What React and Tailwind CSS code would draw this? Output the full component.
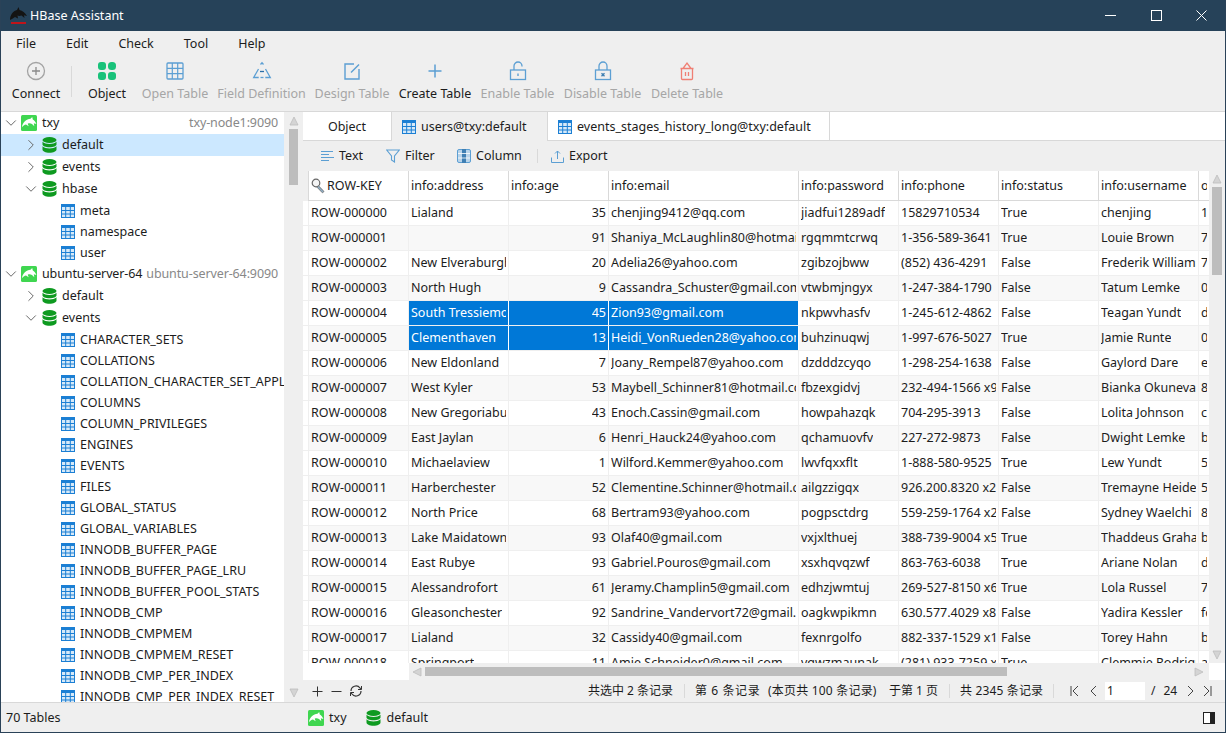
import React from "react";
import { ChevronRight, ChevronDown } from "lucide-react";

const Dolphin = ({ s = 16 }) => (
  <svg width={s} height={s} viewBox="0 0 16 16" className="shrink-0">
    <rect width="16" height="16" rx="1.5" fill="#3fd650" />
    <path d="M.8 12.500C1.500 7.500 5.500 3.800 9.500 3.800L11.200 2l.6 2.600c1.500.8 2.700 2.200 3.600 4.400l-2.600-.7.500 3-2.300-2.300c-1.500-.8-3-.8-4.300-.3l1 2.500-2.700-1.600C3.500 9.800 2 11 .8 12.500z" fill="#fff" />
  </svg>
);
const Db = ({ s = 15 }) => (
  <svg width={s} height={s + 1} viewBox="0 0 15 16" className="shrink-0">
    <ellipse cx="7.5" cy="3" rx="7" ry="3" fill="#0e9a20" />
    <path d="M.5 4.8C2 6.5 4.8 7 7.5 7s5.500-.5 7-2.200V7.500C14.500 9 11.500 10.200 7.500 10.200S.5 9 .5 7.500z" fill="#0e9a20" />
    <path d="M.5 9.300c1.500 1.700 4.300 2.200 7 2.200s5.500-.5 7-2.200v3.200c0 1.800-3 3.200-7 3.200s-7-1.400-7-3.200z" fill="#0e9a20" />
  </svg>
);
const TableIcon = ({ s = 14, c = "#1b7fd4" }) => (
  <svg width={s} height={s} viewBox="0 0 14 14" className="shrink-0">
    <rect x="0.5" y="0.5" width="13" height="13" fill="#d6e9f8" stroke={c} />
    <rect x="0" y="0" width="14" height="3" fill={c} />
    <path d="M4.700 3v10.500M9.300 3v10.500M.5 6.500h13M.5 10h13" stroke={c} strokeWidth="1" />
  </svg>
);
const Key = () => (
  <svg width="15" height="16" viewBox="0 0 15 16" className="shrink-0">
    <circle cx="5" cy="5" r="3.800" fill="#f4f4f4" stroke="#666" strokeWidth="1.200" />
    <path d="M7.500 7.800l5.500 5.700-1.600 1.300-5.500-5.700z" fill="#8fb0c8" stroke="#666" strokeWidth="0.800" />
  </svg>
);
const Ico = ({ children, w = 20, h = 20 }) => (
  <svg width={w} height={h} viewBox="0 0 20 20" fill="none" className="shrink-0">{children}</svg>
);
const blue = "#5c9fd3";
const TOOLS = [
  { t: "Connect", w: "w-[48px]", on: 1, i: <Ico><circle cx="10" cy="10" r="8.500" stroke="#a3a3a3" strokeWidth="1.300" /><path d="M10 6v8M6 10h8" stroke="#8a8a8a" strokeWidth="1.300" /></Ico> },
  { sep: 1 },
  { t: "Object", w: "w-[38px] mr-[6px]", on: 1, i: <Ico><rect x="1" y="1" width="8" height="8" rx="3" fill="#19c27a" /><rect x="11" y="1" width="8" height="8" rx="3.500" fill="#19c27a" /><rect x="1" y="11" width="8" height="8" rx="3" fill="#19c27a" /><rect x="11" y="11" width="8" height="8" rx="3" fill="#19c27a" /></Ico> },
  { t: "Open Table", w: "w-[66px]", i: <Ico><rect x="2" y="2" width="16" height="16" rx="1" stroke={blue} strokeWidth="1.300" /><path d="M7.300 2v16M12.700 2v16M2 7.300h16M2 12.700h16" stroke={blue} strokeWidth="1.200" /></Ico> },
  { t: "Field Definition", w: "w-[87px]", i: <Ico><path d="M8.500 3.500l1.500-1.700 1.500 1.700" stroke={blue} strokeWidth="1.300" /><path d="M6.500 8l-4.800 8.500h5M13.500 8l4.800 8.500h-5" stroke={blue} strokeWidth="1.300" /><path d="M8 10.500h4" stroke="#2a6ea8" strokeWidth="1.300" /><path d="M8.500 16.500h3" stroke={blue} strokeWidth="1.300" /></Ico> },
  { t: "Design Table", w: "w-[74px]", i: <Ico><path d="M12 3H3v15h14V8" stroke={blue} strokeWidth="1.400" /><path d="M9 11.500l8-8" stroke={blue} strokeWidth="1.400" /></Ico> },
  { t: "Create Table", w: "w-[72px]", on: 1, i: <Ico><path d="M10 3.500v13M3.500 10h13" stroke={blue} strokeWidth="1.500" /></Ico> },
  { t: "Enable Table", w: "w-[73px]", i: <Ico><rect x="2.500" y="9" width="15" height="9.500" stroke={blue} strokeWidth="1.300" /><path d="M6 9V5a4 4 0 0 1 8 0v.5" stroke={blue} strokeWidth="1.300" /><path d="M10 12.500v2.500" stroke={blue} strokeWidth="1.400" /></Ico> },
  { t: "Disable Table", w: "w-[77px]", i: <Ico><rect x="2.500" y="9" width="15" height="9.500" stroke={blue} strokeWidth="1.300" /><path d="M6 9V5a4 4 0 0 1 8 0v4" stroke={blue} strokeWidth="1.300" /><path d="M8.500 12.300l3 3M11.500 12.300l-3 3" stroke="#3a7cb0" strokeWidth="1.300" /></Ico> },
  { t: "Delete Table", w: "w-[72px]", i: <Ico><path d="M4.500 8v9.500a1 1 0 0 0 1 1h9a1 1 0 0 0 1-1V8" stroke="#ef7f74" strokeWidth="1.300" /><path d="M3.500 7.500h13M6 7.500l4-5.500 4 5.500" stroke="#ef7f74" strokeWidth="1.300" /><path d="M8.500 11v4M11.500 11v4" stroke="#ef7f74" strokeWidth="1.300" /></Ico> },
];

const TABLES = ["CHARACTER_SETS","COLLATIONS","COLLATION_CHARACTER_SET_APPLICABILITY","COLUMNS","COLUMN_PRIVILEGES","ENGINES","EVENTS","FILES","GLOBAL_STATUS","GLOBAL_VARIABLES","INNODB_BUFFER_PAGE","INNODB_BUFFER_PAGE_LRU","INNODB_BUFFER_POOL_STATS","INNODB_CMP","INNODB_CMPMEM","INNODB_CMPMEM_RESET","INNODB_CMP_PER_INDEX","INNODB_CMP_PER_INDEX_RESET"];

const Host = ({ name, host }) => (
  <div className="flex items-center h-[22px] pl-[1px] pr-[6px] shrink-0 tracking-[-0.12px]">
    <ChevronDown size={18} strokeWidth={1.300} color="#666" className="shrink-0" />
    <span className="ml-[1px]"><Dolphin /></span>
    <span className="ml-[5px] whitespace-nowrap">{name}</span>
    <span className="ml-auto text-[#888] whitespace-nowrap">{host}</span>
  </div>
);
const DbRow = ({ name, open, sel }) => (
  <div className={`flex items-center h-[22px] pl-[21px] shrink-0 ${sel ? "bg-[#cce8ff]" : ""}`}>
    {open ? <ChevronDown size={18} strokeWidth={1.300} color="#666" className="shrink-0" /> : <ChevronRight size={18} strokeWidth={1.300} color="#666" className="shrink-0" />}
    <span className="ml-[2px]"><Db /></span>
    <span className="ml-[5px]">{name}</span>
  </div>
);
const TbRow = ({ name }) => (
  <div className="flex items-center h-[21px] pl-[60px] shrink-0">
    <TableIcon />
    <span className="ml-[5px] whitespace-nowrap">{name}</span>
  </div>
);

const COLS = [
  "w-[100px]","w-[100px]","w-[100px]","w-[190px]","w-[100px]","w-[100px]","w-[100px]","w-[100px]","w-[11px]",
];
const HEAD = ["ROW-KEY","info:address","info:age","info:email","info:password","info:phone","info:status","info:username","other"];
const ROWS = [
  ["Lialand",35,"chenjing9412@qq.com","jiadfui1289adf","15829710534","True","chenjing","1"],
  ["",91,"Shaniya_McLaughlin80@hotmail.com","rgqmmtcrwq","1-356-589-3641","True","Louie Brown","7"],
  ["New Elveraburgh",20,"Adelia26@yahoo.com","zgibzojbww","(852) 436-4291","False","Frederik Williamson","7"],
  ["North Hugh",9,"Cassandra_Schuster@gmail.com","vtwbmjngyx","1-247-384-1790","False","Tatum Lemke","0"],
  ["South Tressiemouth",45,"Zion93@gmail.com","nkpwvhasfv","1-245-612-4862","False","Teagan Yundt","d"],
  ["Clementhaven",13,"Heidi_VonRueden28@yahoo.com","buhzinuqwj","1-997-676-5027","True","Jamie Runte","0"],
  ["New Eldonland",7,"Joany_Rempel87@yahoo.com","dzdddzcyqo","1-298-254-1638","False","Gaylord Dare","e"],
  ["West Kyler",53,"Maybell_Schinner81@hotmail.com","fbzexgidvj","232-494-1566 x9","False","Bianka Okuneva","8"],
  ["New Gregoriaburgh",43,"Enoch.Cassin@gmail.com","howpahazqk","704-295-3913","False","Lolita Johnson","c7"],
  ["East Jaylan",6,"Henri_Hauck24@yahoo.com","qchamuovfv","227-272-9873","False","Dwight Lemke","b"],
  ["Michaelaview",1,"Wilford.Kemmer@yahoo.com","lwvfqxxflt","1-888-580-9525","True","Lew Yundt","5"],
  ["Harberchester",52,"Clementine.Schinner@hotmail.com","ailgzzigqx","926.200.8320 x28","False","Tremayne Heide","5"],
  ["North Price",68,"Bertram93@yahoo.com","pogpsctdrg","559-259-1764 x2","False","Sydney Waelchi","8"],
  ["Lake Maidatown",93,"Olaf40@gmail.com","vxjxlthuej","388-739-9004 x5","True","Thaddeus Graham","b"],
  ["East Rubye",93,"Gabriel.Pouros@gmail.com","xsxhqvqzwf","863-763-6038","True","Ariane Nolan","d"],
  ["Alessandrofort",61,"Jeramy.Champlin5@gmail.com","edhzjwmtuj","269-527-8150 x6","True","Lola Russel","7"],
  ["Gleasonchester",92,"Sandrine_Vandervort72@gmail.com","oagkwpikmn","630.577.4029 x88","False","Yadira Kessler","fc"],
  ["Lialand",32,"Cassidy40@gmail.com","fexnrgolfo","882-337-1529 x1","False","Torey Hahn","b"],
  ["Springport",11,"Amie.Schneider0@gmail.com","vqwzmaunak","(281) 933-7259 x","True","Clemmie Rodriguez","a"],
];

const Arrow = ({ d }) => {
  const p = { u: "M5 1l4 8H1z", d: "M1 1h8L5 9z", l: "M1 5l8-4v8z", r: "M9 5L1 1v8z" }[d];
  return <svg width="10" height="10" viewBox="0 0 10 10" className="shrink-0"><path d={p} fill="#d4d4d4" stroke="#bdbdbd" strokeWidth="0.800" /></svg>;
};

const Cell = ({ w, text, right, sel, head }) => (
  <div className={`${w} shrink-0 h-full border-r px-[2px] flex items-center overflow-hidden whitespace-nowrap ${right ? "justify-end" : ""} ${head ? "border-[#d9d9d9]" : sel ? "pb-[1px] bg-[#0078d7] text-white border-white" : "pb-[1px] border-[#efefef]"}`}>
    <span className="block overflow-hidden">{text}</span>
  </div>
);

const Sep = () => <div className="w-px h-[14px] bg-[#d9d9d9] shrink-0" />;

const Pager = ({ d }) => (
  <svg width="10" height="12" viewBox="0 0 10 12" fill="none" stroke="#444" strokeWidth="1" className="shrink-0"><path d={d} /></svg>
);

export default function App() {
  return (
    <div className="w-[1226px] h-[733px] flex flex-col overflow-hidden border border-t-0 border-[#2a4258] bg-[#efefef] text-[12.5px] leading-[18px] text-[#1c1c1c] font-['Noto_Sans','Noto_Sans_CJK_SC',sans-serif]">
      <div className="h-[31px] shrink-0 bg-[#264259] flex items-center text-white pl-[8px]">
        <svg width="20" height="20" viewBox="0 0 20 20" className="shrink-0">
          <path d="M1 14c0-5 3-9 7-10l1.500-3 1 3c3 .5 5.500 3 7.500 6l-3-.8.5 2.800-3-2.500c-1.500 .5-3 .5-4 0l.5 3-3-1.500L3 13z" fill="#141414" />
          <rect x="2" y="16" width="15" height="2" fill="#c0141a" />
        </svg>
        <span className="ml-[1px]">HBase Assistant</span>
        <div className="ml-auto flex items-center">
          <div className="w-[46px] flex justify-center"><svg width="11" height="11" viewBox="0 0 11 11"><path d="M0 5.500h11" stroke="#fff" /></svg></div>
          <div className="w-[46px] flex justify-center"><svg width="11" height="11" viewBox="0 0 11 11"><rect x="0.500" y="0.500" width="10" height="10" fill="none" stroke="#fff" /></svg></div>
          <div className="w-[46px] flex justify-center pr-[1px]"><svg width="11" height="11" viewBox="0 0 11 11"><path d="M.5.500l10 10M10.500.500l-10 10" stroke="#fff" /></svg></div>
        </div>
      </div>

      <div className="h-[25px] shrink-0 flex items-center gap-[30px] pl-[15px]">
        {["File","Edit","Check","Tool","Help"].map((m) => <span key={m}>{m}</span>)}
      </div>

      <div className="h-[56px] shrink-0 flex items-start gap-[10px] pl-[11px] border-b border-[#d8d8d8]">
        {TOOLS.map((t, i) => t.sep ? (
          <div key={i} className="w-px h-[31px] bg-[#d9d9d9] mt-[10px] ml-[1px] mr-[6px]" />
        ) : (
          <div key={t.t} className={`${t.w} shrink-0 flex flex-col items-center pt-[5px] whitespace-nowrap ${t.on ? "" : "text-[#a6a6a6]"}`}>
            {t.i}
            <span className="mt-[4px]">{t.t}</span>
          </div>
        ))}
      </div>

      <div className="flex-1 min-h-0 flex">
        <div className="w-[283px] shrink-0 bg-white overflow-hidden flex flex-col">
          <Host name="txy" host="txy-node1:9090" />
          <DbRow name="default" sel />
          <DbRow name="events" />
          <DbRow name="hbase" open />
          {["meta","namespace","user"].map((n) => <TbRow key={n} name={n} />)}
          <Host name="ubuntu-server-64" host="ubuntu-server-64:9090" />
          <DbRow name="default" />
          <DbRow name="events" open />
          {TABLES.map((n) => <TbRow key={n} name={n} />)}
        </div>

        <div className="w-[19px] shrink-0 flex flex-col items-center justify-between py-[4px]">
          <div className="flex flex-col items-center gap-[3px]">
            <Arrow d="u" />
            <div className="w-[9px] h-[56px] bg-[#bdbdbd]" />
          </div>
          <Arrow d="d" />
        </div>

        <div className="flex-1 min-w-0 flex flex-col">
          <div className="h-[29px] shrink-0 flex bg-white border-b border-[#d8d8d8]">
            <div className="w-[89px] h-[29px] pt-[1px] border-r border-b border-[#d8d8d8] flex items-center justify-center">Object</div>
            <div className="w-[155px] h-[29px] pt-[1px] bg-[#efefef] flex items-center pl-[10px] gap-[5px]"><TableIcon />users@txy:default</div>
            <div className="w-[283px] h-[28px] pt-[1px] border-l border-r border-[#d8d8d8] flex items-center pl-[10px] gap-[5px] whitespace-nowrap"><TableIcon />events_stages_history_long@txy:default</div>
          </div>

          <div className="h-[30px] shrink-0 flex items-center pl-[18px]">
            <svg width="13" height="13" viewBox="0 0 13 13" className="shrink-0"><path d="M0 1.500h12M0 4.500h8M0 7.500h13M0 10.500h8" stroke="#5c9fd3" strokeWidth="1.200" /></svg>
            <span className="ml-[5px] w-[24px] whitespace-nowrap">Text</span>
            <svg width="14" height="14" viewBox="0 0 14 14" fill="none" className="ml-[23px] shrink-0"><path d="M.7 1h12.600L8.500 7v6L5.500 11V7z" stroke="#5c9fd3" strokeWidth="1.100" /></svg>
            <span className="ml-[5px] w-[29px] whitespace-nowrap">Filter</span>
            <svg width="14" height="14" viewBox="0 0 14 14" className="ml-[23px] shrink-0"><rect x="0.500" y="0.500" width="13" height="13" rx="1.500" fill="#b9d4ea" stroke="#5c9fd3" /><rect x="5" y="0" width="4" height="14" fill="#3f7fb3" /><path d="M1 4.500h12M1 9h12" stroke="#fff" strokeWidth="0.800" /></svg>
            <span className="ml-[5px] w-[45px] whitespace-nowrap">Column</span>
            <div className="ml-[16px]"><Sep /></div>
            <svg width="13" height="13" viewBox="0 0 13 13" fill="none" className="ml-[13px] shrink-0"><path d="M6.500 9V1M4 3.500L6.500 1 9 3.500" stroke="#5c9fd3" /><path d="M.5 7.500v5h12v-5" stroke="#5c9fd3" /></svg>
            <span className="ml-[5px]">Export</span>
          </div>

          <div className="h-[509px] shrink-0 flex">
            <div className="w-[906px] shrink-0 flex flex-col">
              <div className="h-[30px] shrink-0 flex">
                <div className="w-[6px] shrink-0 border-r border-[#d9d9d9]" />
                <div className="flex-1 min-w-0 flex bg-white border-b border-[#d9d9d9] overflow-hidden">
                  {HEAD.map((h, i) => (
                    <Cell key={h} w={COLS[i]} head text={i === 0 ? <span className="flex items-center gap-[1px]"><Key />{h}</span> : h} />
                  ))}
                </div>
              </div>
              <div className="h-[462px] shrink-0 overflow-hidden bg-white">
                {ROWS.map((r, y) => (
                  <div key={y} className={`h-[25px] flex border-b border-[#efefef] ${y % 2 ? "bg-[#f8f8f8]" : "bg-white"}`}>
                    <div className="w-[6px] shrink-0 h-full border-r border-[#efefef] bg-white" />
                    <div className="flex-1 min-w-0 flex overflow-hidden">
                      {[`ROW-${String(y).padStart(6, "0")}`, ...r].map((c, x) => (
                        <Cell key={x} w={COLS[x]} text={c} right={x === 2} sel={(y === 4 || y === 5) && x >= 1 && x <= 3} />
                      ))}
                    </div>
                  </div>
                ))}
              </div>
              <div className="h-[17px] shrink-0 flex">
                <div className="w-[106px] shrink-0 bg-white" />
                <div className="flex-1 min-w-0 flex items-center pl-[3px] gap-[3px]">
                  <Arrow d="l" />
                  <div className="w-[582px] h-[9px] bg-[#bdbdbd]" />
                  <div className="ml-auto mr-[5px]"><Arrow d="r" /></div>
                </div>
              </div>
            </div>
            <div className="w-[16px] shrink-0 flex flex-col items-center">
              <div className="h-[492px] shrink-0 flex flex-col items-center justify-between py-[3px]">
                <div className="flex flex-col items-center gap-[3px]">
                  <Arrow d="u" />
                  <div className="w-[10px] h-[88px] bg-[#bdbdbd]" />
                </div>
                <Arrow d="d" />
              </div>
              <div className="h-[17px] w-full bg-white" />
            </div>
          </div>

          <div className="h-[22px] shrink-0 flex items-center text-[12px] pl-[9px] whitespace-nowrap">
            <svg width="11" height="11" viewBox="0 0 11 11" className="shrink-0"><path d="M5.500.500v10M.5 5.500h10" stroke="#333" /></svg>
            <svg width="11" height="11" viewBox="0 0 11 11" className="ml-[8px] shrink-0"><path d="M.5 5.500h10" stroke="#333" /></svg>
            <svg width="14" height="14" viewBox="0 0 14 14" fill="none" className="ml-[7px] shrink-0"><path d="M2 7a5 5 0 0 1 9-3l1 1.500M12 7a5 5 0 0 1-9 3L2 8.500" stroke="#333" strokeWidth="1.200" /><path d="M12.500 2v3.500H9M1.500 12V8.500H5" stroke="#333" strokeWidth="1" /></svg>
            <span className="ml-[225px] w-[87px]">共选中 2 条记录</span>
            <div className="ml-[9px] mr-[10px]"><Sep /></div>
            <span className="w-[73px] tracking-[0.6px]">第 6 条记录</span>
            <span className="w-[121px] tracking-[0.2px]">(本页共 100 条记录)</span>
            <span className="w-[49px]">于第 1 页</span>
            <div className="ml-[11px] mr-[10px]"><Sep /></div>
            <span className="w-[83px] tracking-[0.15px]">共 2345 条记录</span>
            <div className="ml-[10px]"><Sep /></div>
            <div className="ml-[15px]"><Pager d="M2 1v10M9 1L4 6l5 5" /></div>
            <div className="ml-[10px]"><Pager d="M7 1L2 6l5 5" /></div>
            <div className="ml-[6px] w-[40px] h-[18px] bg-white pl-[2px] flex items-center">1</div>
            <span className="ml-[6px]">/</span>
            <span className="ml-[8px]">24</span>
            <div className="ml-[8px]"><Pager d="M3 1l5 5-5 5" /></div>
            <div className="ml-[8px]"><Pager d="M8 1v10M1 1l5 5-5 5" /></div>
          </div>
        </div>
      </div>

      <div className="h-[30px] shrink-0 border-t border-[#d8d8d8] flex items-center pl-[5px] pr-[10px]">
        <span className="w-[302px] shrink-0">70 Tables</span>
        <Dolphin />
        <span className="ml-[5px]">txy</span>
        <span className="ml-[19px]"><Db /></span>
        <span className="ml-[6px]">default</span>
        <svg width="12" height="12" viewBox="0 0 12 12" className="ml-auto shrink-0"><rect x="0.500" y="0.500" width="11" height="11" fill="#fff" stroke="#222" /><rect x="7" y="0" width="5" height="12" fill="#222" /></svg>
      </div>
    </div>
  );
}
